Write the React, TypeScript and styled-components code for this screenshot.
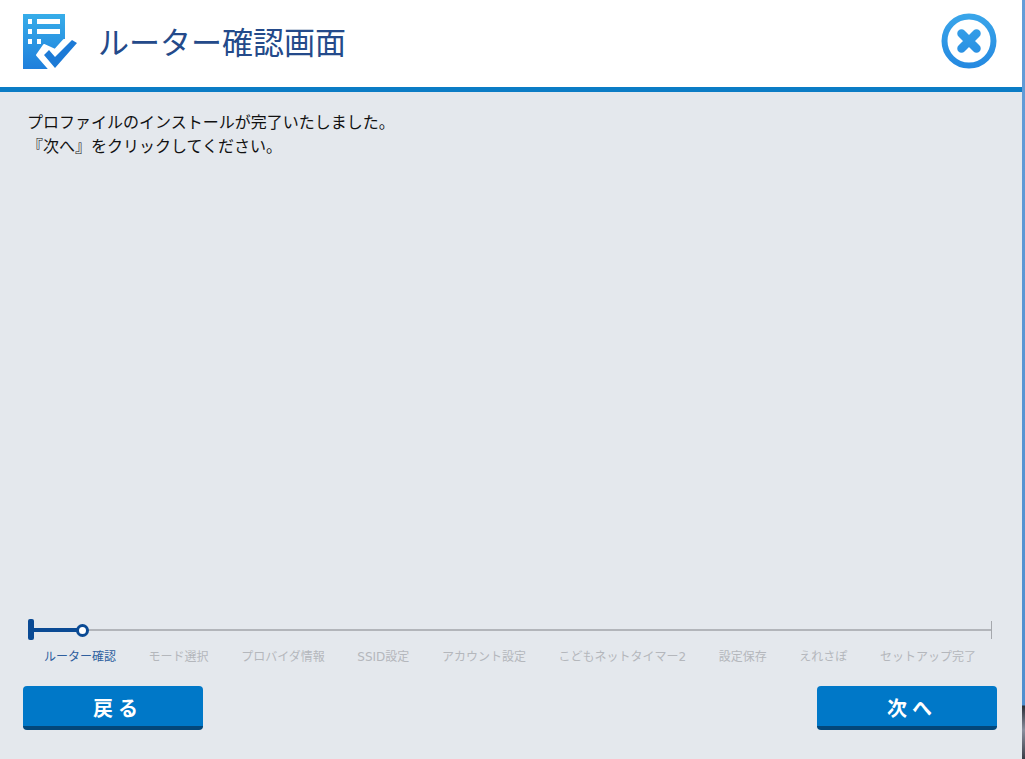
import { createGlobalStyle, styled } from 'styled-components';

const GlobalStyle = createGlobalStyle`
  html, body {
    margin: 0;
    padding: 0;
    background: #e4e8ed;
  }
  * {
    box-sizing: border-box;
  }
`;

const STEPS = [
  'ルーター確認',
  'モード選択',
  'プロバイダ情報',
  'SSID設定',
  'アカウント設定',
  'こどもネットタイマー2',
  '設定保存',
  'えれさぽ',
  'セットアップ完了',
];

const Page = styled.div`
  display: flex;
  width: 1025px;
  height: 759px;
  overflow: hidden;
`;

// デスクトップの背景が右端に少しだけ見えている
const DesktopEdge = styled.div`
  flex: 1;
  background: linear-gradient(
    to bottom,
    #659dd8 0,
    #4f8fcf 705px,
    #2b2f38 706px,
    #8a8f9e 730px,
    #3a3d46 759px
  );
`;

const Frame = styled.div`
  width: 1022px;
  flex: none;
  display: flex;
  flex-direction: column;
  background: #e4e8ed;
  font-family: "Noto Sans CJK JP", "Liberation Sans", sans-serif;
`;

const Header = styled.header`
  height: 92px;
  flex: none;
  display: flex;
  align-items: center;
  justify-content: space-between;
  padding: 0 25px 3px 23px;
  background: #fff;
  border-bottom: 5px solid #0b7cc5;
`;

const TitleGroup = styled.div`
  display: flex;
  align-items: center;
  gap: 19px;
`;

const Title = styled.h1`
  margin: 0 0 2px;
  font-size: 31px;
  font-weight: 400;
  line-height: 44px;
  color: #244a8a;
`;

const CloseButton = styled.div`
  display: flex;
  margin-bottom: 2px;
`;

const Content = styled.main`
  flex: 1;
  padding: 17px 27px 0;
`;

const Message = styled.p`
  margin: 0;
  font-size: 16px;
  line-height: 24px;
  color: #111;
`;

const Progress = styled.div`
  padding: 0 30px 0 28px;
`;

const Track = styled.div`
  position: relative;
  height: 22px;
  margin-bottom: 8px;
`;

const TrackLine = styled.div`
  position: absolute;
  left: 0;
  right: 0;
  top: 10px;
  height: 2px;
  background: #b2b5ba;
`;

const TrackEnd = styled.div`
  position: absolute;
  right: 0;
  top: 2px;
  width: 1px;
  height: 18px;
  background: #a5a8ad;
`;

const TrackDone = styled.div`
  position: absolute;
  left: 0;
  top: 9px;
  width: 50px;
  height: 4px;
  background: #0a4a94;
`;

const TrackStart = styled.div`
  position: absolute;
  left: 0;
  top: 0;
  width: 6px;
  height: 21px;
  border-radius: 2px;
  background: #0a4a94;
`;

const TrackDot = styled.div`
  position: absolute;
  left: 48px;
  top: 5px;
  width: 13px;
  height: 13px;
  border: 3px solid #0a4a94;
  border-radius: 50%;
  background: #fff;
`;

const StepList = styled.ol`
  display: flex;
  justify-content: space-between;
  margin: 0;
  padding: 0 16px;
  list-style: none;
`;

const Step = styled.li<{ $active?: boolean }>`
  font-family: "DejaVu Sans", "Noto Sans CJK JP", sans-serif;
  font-size: 12px;
  line-height: 16px;
  white-space: nowrap;
  color: ${(props) => (props.$active ? '#2f5f9e' : '#b4b7bc')};
`;

const Footer = styled.footer`
  display: flex;
  justify-content: space-between;
  padding: 21px 25px 29px 23px;
`;

const NavButton = styled.button`
  width: 180px;
  height: 44px;
  padding: 2px 0 0 10px;
  border: 0;
  border-bottom: 4px solid #03477a;
  border-radius: 4px;
  background: #0078c8;
  color: #fff;
  font-family: inherit;
  font-size: 20px;
  font-weight: 700;
  letter-spacing: 5px;
`;

const ChecklistIcon = () => (
  <svg width="56" height="56" viewBox="0 0 56 56" aria-hidden="true">
    <defs>
      <linearGradient id="sheet" x1="0" y1="0" x2="0" y2="1">
        <stop offset="0" stopColor="#37ade9" />
        <stop offset="1" stopColor="#1f7fdc" />
      </linearGradient>
    </defs>
    <rect x="0" y="0" width="42" height="55" fill="url(#sheet)" />
    <path d="M5 5h4v5H5zM14 5h23v5H14zM5 15h4v5H5zM14 15h23v5H14zM5 25h4v5H5zM14 25h4v5H14z" fill="#fff" />
    <path d="M14 41L21 31L32 36L41 26H56V56H27Z" fill="#fff" stroke="#fff" strokeWidth="2" strokeLinejoin="round" />
    <path d="M21 41L26 36L32 43L49 26L54 29L32 54Z" fill="#1c7ad6" />
  </svg>
);

const CloseIcon = () => (
  <svg width="56" height="56" viewBox="0 0 56 56" aria-hidden="true">
    <defs>
      <linearGradient id="ring" gradientUnits="userSpaceOnUse" x1="0" y1="0" x2="0" y2="56">
        <stop offset="0" stopColor="#3aa6ea" />
        <stop offset="1" stopColor="#2488e0" />
      </linearGradient>
    </defs>
    <circle cx="28" cy="28" r="24.5" fill="#fff" stroke="url(#ring)" strokeWidth="6" />
    <path d="M20.5 20.5L35.5 35.5M35.5 20.5L20.5 35.5" stroke="url(#ring)" strokeWidth="8.5" strokeLinecap="round" />
  </svg>
);

const App = () => (
  <Page>
    <GlobalStyle />
    <Frame>
      <Header>
        <TitleGroup>
          <ChecklistIcon />
          <Title>ルーター確認画面</Title>
        </TitleGroup>
        <CloseButton>
          <CloseIcon />
        </CloseButton>
      </Header>
      <Content>
        <Message>プロファイルのインストールが完了いたしました。</Message>
        <Message>『次へ』をクリックしてください。</Message>
      </Content>
      <Progress>
        <Track>
          <TrackLine />
          <TrackEnd />
          <TrackDone />
          <TrackStart />
          <TrackDot />
        </Track>
        <StepList>
          {STEPS.map((step, index) => (
            <Step key={step} $active={index === 0}>
              {step}
            </Step>
          ))}
        </StepList>
      </Progress>
      <Footer>
        <NavButton>戻る</NavButton>
        <NavButton>次へ</NavButton>
      </Footer>
    </Frame>
    <DesktopEdge />
  </Page>
);

export default App;
